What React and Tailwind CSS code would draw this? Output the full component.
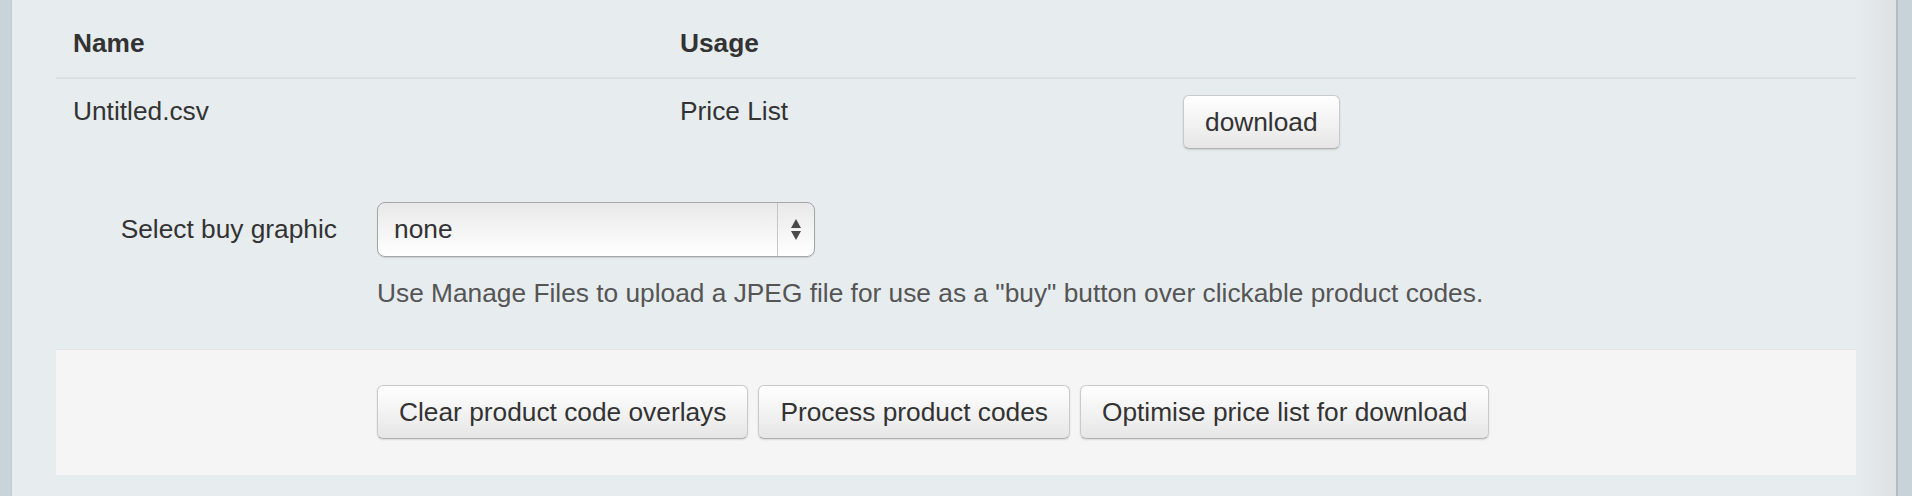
import React from 'react';

const font = { fontFamily: '"Liberation Sans", Arial, Helvetica, sans-serif' };

const Btn = ({ children }) => (
    <button
        className="h-[54px] px-[21px] rounded-[6px] border border-[#cacaca] border-b-[#b0b0b0] bg-gradient-to-b from-white to-[#e6e6e6] text-[26.3px] leading-[37px] text-[#333] shadow-[inset_0_1px_0_rgba(255,255,255,0.5),0_1px_2px_rgba(0,0,0,0.12)] whitespace-nowrap"
    >
        {children}
    </button>
);

const App = () => {
    return (
        <div className="flex h-[496px] w-full overflow-hidden text-[#333]" style={font}>
            {/* left gutter */}
            <div className="w-[12px] shrink-0 bg-[#c9d3da] border-r border-[#bfc9d0]" />

            {/* panel */}
            <div className="flex-1 flex bg-[#e7ecef]">
                <div className="flex-1 pl-[44px] pt-[10px]">
                    <div className="w-[1800px]">
                        {/* table header */}
                        <div className="grid grid-cols-[609px_503px_1fr] border-b-2 border-[#dcdfe0]">
                            <div className="py-[15px] pl-[17px] text-[26.3px] leading-[37px] font-bold">Name</div>
                            <div className="py-[15px] pl-[15px] text-[26.3px] leading-[37px] font-bold">Usage</div>
                            <div />
                        </div>
                        {/* table row */}
                        <div className="grid grid-cols-[609px_503px_1fr]">
                            <div className="pt-[14px] pl-[17px] text-[26.3px] leading-[37px]">Untitled.csv</div>
                            <div className="pt-[14px] pl-[15px] text-[26.3px] leading-[37px]">Price List</div>
                            <div className="pt-[16px] pb-[15px] pl-[15px]">
                                <Btn>download</Btn>
                            </div>
                        </div>

                        {/* form control */}
                        <div className="flex mt-[38px]">
                            <label className="w-[281px] text-right text-[26.3px] leading-[37px] pt-[9px]">
                                Select buy graphic
                            </label>
                            <div className="ml-[40px]">
                                <div className="relative flex w-[438px] h-[55px] rounded-[8px] border border-[#a6a6a6] bg-gradient-to-b from-[#e9e9e9] to-white shadow-[0_1px_1px_rgba(0,0,0,0.12)]">
                                    <div className="flex-1 pl-[16px] text-[26.3px] leading-[53px]">none</div>
                                    <div className="w-[37px] border-l border-[#c6c6c6] flex flex-col items-center justify-center gap-[3px]">
                                        <svg width="10" height="9" viewBox="0 0 10 9">
                                            <path d="M5 0 L10 9 L0 9 Z" fill="#4a4a4a" />
                                        </svg>
                                        <svg width="10" height="9" viewBox="0 0 10 9">
                                            <path d="M0 0 L10 0 L5 9 Z" fill="#4a4a4a" />
                                        </svg>
                                    </div>
                                </div>
                                <p className="mt-[18px] text-[26.3px] leading-[37px] text-[#555]">
                                    Use Manage Files to upload a JPEG file for use as a "buy" button over clickable product codes.
                                </p>
                            </div>
                        </div>

                        {/* form actions */}
                        <div className="mt-[37px] h-[126px] bg-[#f5f5f5] border-t border-[#e2e4e5] pl-[321px] pt-[35px] flex gap-[10px] items-start">
                            <Btn>Clear product code overlays</Btn>
                            <Btn>Process product codes</Btn>
                            <Btn>Optimise price list for download</Btn>
                        </div>
                    </div>
                </div>
                <div className="w-[40px] shrink-0 bg-gradient-to-r from-[#e7ecef] to-[#dde1e4]" />
            </div>

            {/* right gutter */}
            <div className="w-[16px] shrink-0 bg-[#c8d2d9] border-l-2 border-[#b3bcc4]" />
        </div>
    );
};

export default App;
